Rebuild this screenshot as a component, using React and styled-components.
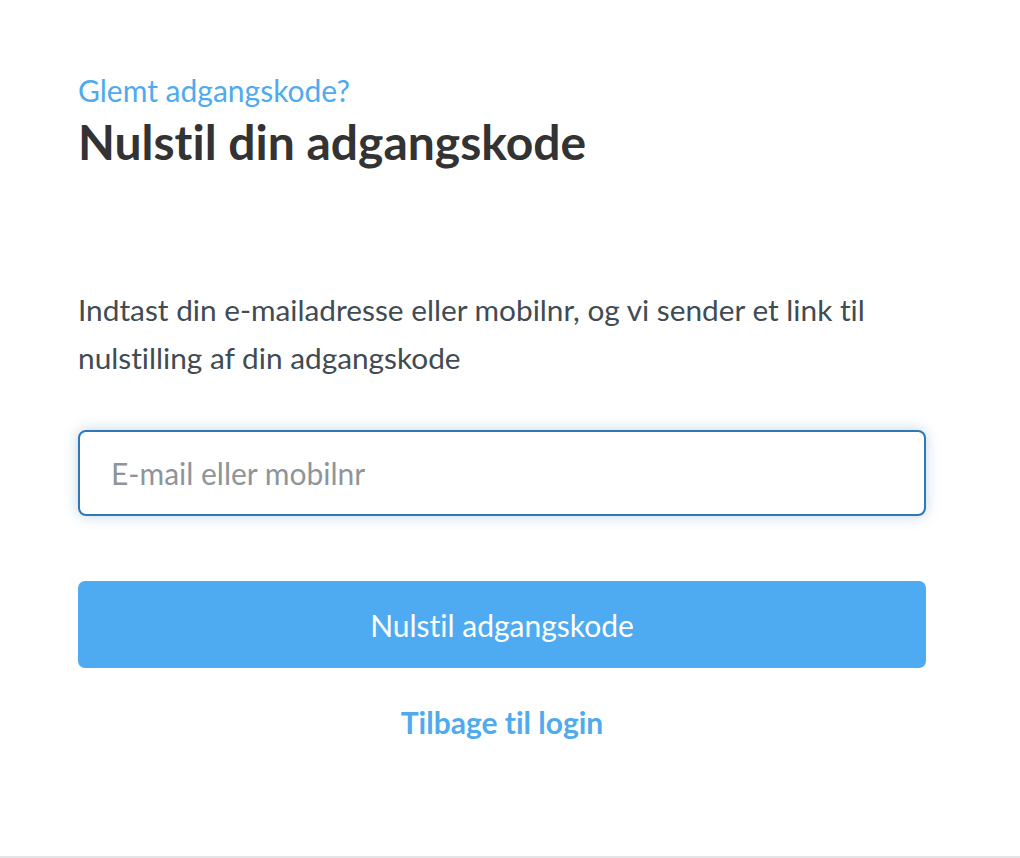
import styled, { createGlobalStyle } from 'styled-components'

const GlobalStyle = createGlobalStyle`
    html, body {
        margin: 0;
        padding: 0;
        background: #ffffff;
    }
    * {
        box-sizing: border-box;
    }
`;

export default function App() {
    return (
        <Page>
            <GlobalStyle />
            <Form onSubmit={(e) => e.preventDefault()}>
                <Header>
                    <Eyebrow>Glemt adgangskode?</Eyebrow>
                    <Title>Nulstil din adgangskode</Title>
                </Header>
                <Intro>
                    Indtast din e-mailadresse eller mobilnr, og vi sender et link til nulstilling af din adgangskode
                </Intro>
                <Field type="text" placeholder="E-mail eller mobilnr" autoFocus />
                <SubmitButton type="submit">Nulstil adgangskode</SubmitButton>
                <BackLink href="#">Tilbage til login</BackLink>
            </Form>
        </Page>
    )
}

const Page = styled.div`
    height: 858px;
    border-bottom: 2px solid #e4e4e8;
    font-family: Lato, "Noto Sans", sans-serif;
    font-variant-ligatures: none;
`;

const Form = styled.form`
    width: 848px;
    margin-left: 78px;
    padding-top: 72px;
    display: flex;
    flex-direction: column;
`;

const Header = styled.div`
    display: flex;
    flex-direction: column;
    gap: 6px;
`;

const Eyebrow = styled.span`
    font-size: 30px;
    line-height: 36px;
    color: #4faaee;
`;

const Title = styled.h1`
    margin: 0;
    font-size: 48px;
    line-height: 56px;
    font-weight: 700;
    color: #333333;
`;

const Intro = styled.p`
    margin: 116px 0 0;
    font-size: 29.8px;
    line-height: 48px;
    color: #404b53;
`;

const Field = styled.input`
    margin-top: 48px;
    height: 86px;
    padding: 0 31px;
    border: 2px solid #2f78b4;
    border-radius: 8px;
    box-shadow: 0 0 14px rgba(47, 120, 180, 0.3);
    font-family: inherit;
    font-size: 30px;
    color: #333;
    caret-color: #222;
    outline: none;
    &::placeholder {
        color: #8e959a;
    }
`;

const SubmitButton = styled.button`
    margin-top: 65px;
    height: 87px;
    border: none;
    border-radius: 7px;
    background: #4fabf1;
    color: #ffffff;
    font-family: inherit;
    font-variant-ligatures: none;
    font-size: 30px;
    cursor: pointer;
`;

const BackLink = styled.a`
    align-self: center;
    margin-top: 36px;
    font-size: 30px;
    line-height: 36px;
    font-weight: 700;
    color: #4faaee;
    text-decoration: none;
`;
